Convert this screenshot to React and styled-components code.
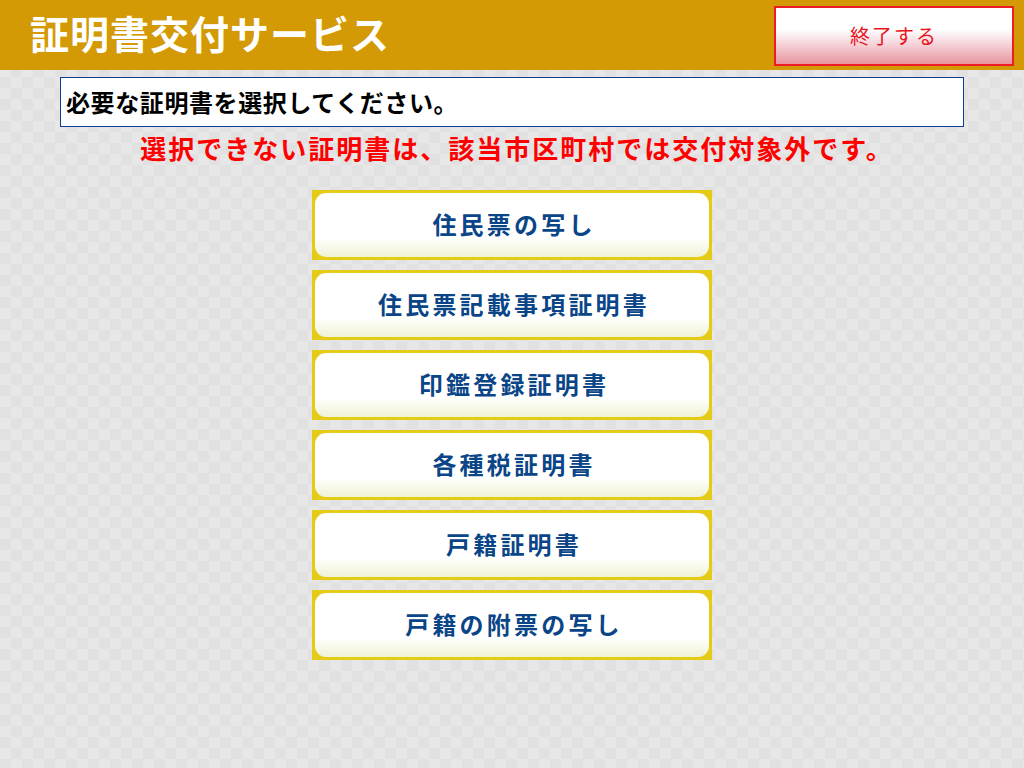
import React from "react";
import styled, { createGlobalStyle } from "styled-components";

const GlobalStyle = createGlobalStyle`
  html, body {
    margin: 0;
    padding: 0;
  }
  body {
    font-family: "Noto Sans CJK JP", "Noto Sans", sans-serif;
    background-color: #e7e7e7;
    background-image:
      linear-gradient(45deg, #e1e1e1 25%, transparent 25%, transparent 75%, #e1e1e1 75%),
      linear-gradient(45deg, #e1e1e1 25%, transparent 25%, transparent 75%, #e1e1e1 75%);
    background-size: 22px 22px;
    background-position: 0 0, 11px 11px;
  }
`;

const certificates = [
  "住民票の写し",
  "住民票記載事項証明書",
  "印鑑登録証明書",
  "各種税証明書",
  "戸籍証明書",
  "戸籍の附票の写し",
];

const Page = styled.div`
  width: 1024px;
  height: 768px;
  display: flex;
  flex-direction: column;
`;

const Header = styled.header`
  height: 70px;
  background: #d39a05;
  display: flex;
  align-items: center;
  justify-content: space-between;
  padding: 0 10px 0 30px;
  box-sizing: border-box;
`;

const Title = styled.h1`
  margin: 0 0 6px;
  color: #fff;
  font-size: 39px;
  font-weight: 700;
  letter-spacing: 1px;
`;

const EndButton = styled.button`
  width: 240px;
  height: 60px;
  margin-top: 1px;
  border: 2px solid #ee1c25;
  background: linear-gradient(to bottom, #ffffff 0%, #ffffff 38%, #f5d2d8 65%, #e8949e 100%);
  color: #e8141c;
  font-family: "Noto Sans CJK JP", sans-serif;
  font-size: 20px;
  letter-spacing: 2px;
  cursor: pointer;
  box-sizing: border-box;
`;

const Main = styled.main`
  display: flex;
  flex-direction: column;
  align-items: center;
  padding-top: 7px;
`;

const Instruction = styled.div`
  width: 904px;
  height: 50px;
  box-sizing: border-box;
  background: #fff;
  border: 1px solid #0b3c96;
  display: flex;
  align-items: center;
  padding: 0 0 2px 5px;
  font-size: 24px;
  font-weight: 700;
  letter-spacing: 0.6px;
  color: #000;
`;

const Notice = styled.p`
  margin: 1px 0 0;
  height: 40px;
  color: #ff0000;
  font-size: 26px;
  font-weight: 700;
  letter-spacing: 2px;
  line-height: 40px;
  padding-left: 10px;
`;

const List = styled.div`
  display: flex;
  flex-direction: column;
  gap: 10px;
  margin-top: 22px;
`;

const Frame = styled.div`
  width: 400px;
  height: 70px;
  box-sizing: border-box;
  padding: 3px;
  background: #e3cc13;
`;

const CertButton = styled.button`
  width: 100%;
  height: 100%;
  border: none;
  border-radius: 11px;
  background: linear-gradient(to bottom, #ffffff 0%, #ffffff 70%, #f0f2d4 100%);
  color: #0a4588;
  font-family: "Noto Sans CJK JP", sans-serif;
  font-size: 24px;
  font-weight: 700;
  letter-spacing: 3.2px;
  padding: 0 0 3px 4px;
  cursor: pointer;
`;

export default function App() {
  return (
    <>
      <GlobalStyle />
      <Page>
        <Header>
          <Title>証明書交付サービス</Title>
          <EndButton>終了する</EndButton>
        </Header>
        <Main>
          <Instruction>必要な証明書を選択してください。</Instruction>
          <Notice>選択できない証明書は、該当市区町村では交付対象外です。</Notice>
          <List>
            {certificates.map((name) => (
              <Frame key={name}>
                <CertButton>{name}</CertButton>
              </Frame>
            ))}
          </List>
        </Main>
      </Page>
    </>
  );
}
